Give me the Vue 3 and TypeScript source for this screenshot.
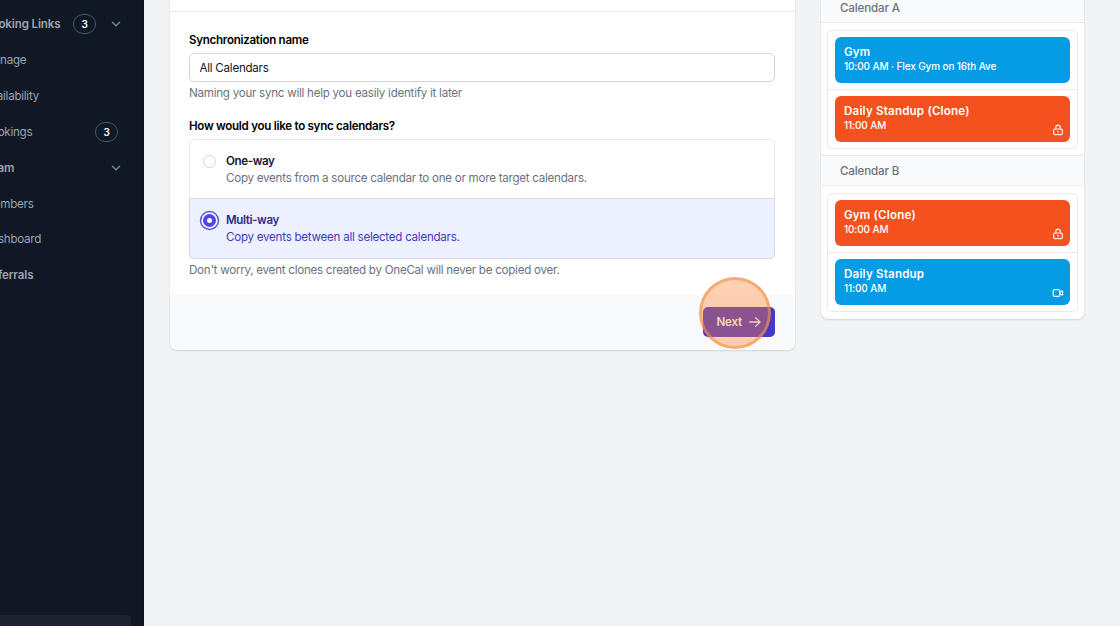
<template>
  <div class="page">
    <aside class="sidebar">
      <nav class="nav">
        <div
          v-for="item in navItems"
          :key="item.label"
          class="nav-item"
          :class="{ section: item.section }"
        >
          <span class="nav-label">{{ item.label }}</span>
          <span v-if="item.count" class="nav-count">{{ item.count }}</span>
          <svg v-if="item.expandable" class="chevron" viewBox="0 0 12 12">
            <path d="M2.4 4.3 L6 7.8 L9.6 4.3" />
          </svg>
        </div>
      </nav>
      <div class="nav-footer"></div>
    </aside>

    <main class="content">
      <section class="card form-card">
        <div class="card-header"></div>
        <div class="card-body">
          <label class="field-label" for="sync-name">Synchronization name</label>
          <input id="sync-name" v-model="syncName" class="field-input" type="text" />
          <p class="field-hint">Naming your sync will help you easily identify it later</p>

          <div class="field-label second">How would you like to sync calendars?</div>
          <div class="options">
            <div
              v-for="option in options"
              :key="option.id"
              class="option"
              :class="{ selected: option.id === syncType }"
              @click="syncType = option.id"
            >
              <span class="radio"></span>
              <div class="option-text">
                <div class="option-title">{{ option.title }}</div>
                <div class="option-desc">{{ option.description }}</div>
              </div>
            </div>
          </div>
          <p class="field-hint">
            Don't worry, event clones created by OneCal will never be copied over.
          </p>
        </div>
        <div class="card-footer">
          <button class="next-button" type="button">
            Next
            <svg class="arrow" viewBox="0 0 12 12">
              <path d="M0.8 6 H10.8 M6.5 1.6 L11 6 L6.5 10.4" />
            </svg>
          </button>
          <span class="click-marker"></span>
        </div>
      </section>

      <section class="card preview-card">
        <div v-for="calendar in calendars" :key="calendar.name" class="calendar">
          <div class="calendar-header">{{ calendar.name }}</div>
          <div class="calendar-body">
            <div class="events">
              <div v-for="event in calendar.events" :key="event.title" class="event-row">
                <div class="event" :class="{ clone: event.icon === 'lock' }">
                  <div class="event-title">{{ event.title }}</div>
                  <div class="event-time">{{ event.time }}</div>
                  <svg v-if="event.icon === 'lock'" class="event-icon" viewBox="0 0 12 12">
                    <rect x="1.7" y="5" width="8.6" height="5.6" rx="1" />
                    <path d="M3.8 5 V3.4 a2.2 2.2 0 0 1 4.4 0 V5" />
                    <path d="M6 7.2 V8.4" />
                  </svg>
                  <svg v-if="event.icon === 'video'" class="event-icon" viewBox="0 0 12 12">
                    <rect x="1.2" y="2.7" width="6.6" height="6.6" rx="1" />
                    <path d="M7.8 5.2 L10.6 3.9 V8.1 L7.8 6.8 Z" />
                  </svg>
                </div>
              </div>
            </div>
          </div>
        </div>
      </section>
    </main>
  </div>
</template>

<script setup lang="ts">
import { ref } from "vue";

interface NavItem {
  label: string;
  section?: boolean;
  count?: number;
  expandable?: boolean;
}

interface CalendarEvent {
  title: string;
  time: string;
  icon?: "lock" | "video";
}

const navItems: NavItem[] = [
  { label: "Booking Links", section: true, count: 3, expandable: true },
  { label: "Manage" },
  { label: "Availability" },
  { label: "Bookings", count: 3 },
  { label: "Team", section: true, expandable: true },
  { label: "Members" },
  { label: "Dashboard" },
  { label: "Referrals", section: true },
];

const syncName = ref("All Calendars");
const syncType = ref("multi");

const options = [
  {
    id: "one",
    title: "One-way",
    description: "Copy events from a source calendar to one or more target calendars.",
  },
  {
    id: "multi",
    title: "Multi-way",
    description: "Copy events between all selected calendars.",
  },
];

const calendars: { name: string; events: CalendarEvent[] }[] = [
  {
    name: "Calendar A",
    events: [
      { title: "Gym", time: "10:00 AM · Flex Gym on 16th Ave" },
      { title: "Daily Standup (Clone)", time: "11:00 AM", icon: "lock" },
    ],
  },
  {
    name: "Calendar B",
    events: [
      { title: "Gym (Clone)", time: "10:00 AM", icon: "lock" },
      { title: "Daily Standup", time: "11:00 AM", icon: "video" },
    ],
  },
];
</script>

<style>
body {
  margin: 0;
  overflow: hidden;
}
</style>

<style scoped>
.page {
  display: flex;
  height: 626px;
  overflow: hidden;
  background: #f2f3f5;
  font-family: Inter, "Liberation Sans", sans-serif;
  font-size: 11.6px;
  letter-spacing: -0.255px;
  color: #111827;
}

.page * {
  box-sizing: border-box;
}

.sidebar {
  display: flex;
  flex-direction: column;
  justify-content: space-between;
  flex: none;
  width: 160px;
  margin-left: -16px;
  background: #101826;
  border-right: 1px solid #080e1a;
}

.nav {
  padding-top: 6.4px;
}

.nav-item {
  display: flex;
  align-items: center;
  height: 35.87px;
  padding-right: 21px;
  color: #9ca3af;
}

.nav-item.section {
  font-weight: 600;
  letter-spacing: -0.14px;
}

.nav-label {
  flex: 1;
  margin-left: -0.4px;
  white-space: nowrap;
}

.section .nav-label {
  margin-left: 0;
}

.nav-count {
  width: 23px;
  height: 20px;
  margin-right: 4px;
  border: 1px solid #4b5563;
  border-radius: 10px;
  color: #fff;
  font-size: 10px;
  font-weight: 600;
  line-height: 18px;
  text-align: center;
}

.nav-count + .chevron {
  margin-left: 10px;
}

.chevron {
  width: 12px;
  height: 12px;
  fill: none;
  stroke: #7b8494;
  stroke-width: 1.5;
  stroke-linecap: round;
  stroke-linejoin: round;
}

.nav-footer {
  width: 147px;
  height: 11px;
  border-radius: 4px 4px 0 0;
  background: #1b2231;
}

.content {
  display: flex;
  flex: 1;
  align-items: flex-start;
  gap: 26px;
  padding-left: 26px;
}

.card {
  background: #fff;
  border-radius: 0 0 7px 7px;
  box-shadow: 0 1px 2px rgba(0, 0, 0, 0.12), 0 0 1px rgba(0, 0, 0, 0.12);
  overflow: hidden;
}

.form-card {
  width: 625px;
}

.card-header {
  height: 12px;
  border-bottom: 1px solid #e7e9ec;
}

.card-body {
  height: 282px;
  padding: 20px 20px 0 19px;
}

.field-label {
  display: block;
  color: #000;
  font-weight: 600;
  letter-spacing: -0.29px;
  line-height: 16px;
}

.field-label.second {
  margin-top: 17px;
}

.field-input {
  display: block;
  width: 100%;
  height: 29px;
  margin-top: 5px;
  padding: 0 10px 0 9.5px;
  border: 1px solid #d1d5db;
  border-radius: 5px;
  outline: none;
  background: #fff;
  color: #111827;
  font: inherit;
  letter-spacing: inherit;
}

.field-hint {
  margin: 3px 0 0;
  color: #6b7280;
  line-height: 16px;
}

.options {
  margin-top: 5px;
}

.option {
  display: flex;
  height: 60px;
  padding: 13px 10px 0 13px;
  border: 1px solid #e5e7eb;
  border-radius: 5px 5px 0 0;
  line-height: 16.5px;
}

.option + .option {
  height: 61px;
  margin-top: -1px;
  border-radius: 0 0 5px 5px;
}

.option.selected {
  border-color: #d3d9f3;
  background: #edf0fe;
}

.radio {
  flex: none;
  width: 13px;
  height: 13px;
  margin: 1.5px 10px 0 0;
  border: 1px solid #d1d5db;
  border-radius: 50%;
  background: #fff;
}

.selected .radio {
  margin-top: 2px;
  border: 4px solid #4f46e5;
  box-shadow: 0 0 0 1.7px #f4f5ff, 0 0 0 3.2px #5b53d6;
}

.option-title {
  font-weight: 600;
  letter-spacing: -0.4px;
}

.option-desc {
  color: #6b7280;
}

.selected .option-title {
  color: #312e81;
}

.selected .option-desc {
  color: #4338ca;
}

.card-footer {
  position: relative;
  display: flex;
  justify-content: flex-end;
  align-items: flex-start;
  height: 56px;
  padding: 13px 20px 0 0;
  background: #f9fafb;
}

.next-button {
  display: flex;
  align-items: center;
  justify-content: space-between;
  width: 72px;
  height: 30px;
  padding: 0 14px 0 13.5px;
  border: 0;
  border-radius: 5px;
  background: #4338ca;
  color: #fff;
  font: inherit;
  font-weight: 600;
  letter-spacing: -0.2px;
}

.arrow {
  width: 12px;
  height: 12px;
  fill: none;
  stroke: #fff;
  stroke-width: 1.3;
  stroke-linecap: round;
  stroke-linejoin: round;
}

/* highlight ring drawn over the button */
.click-marker {
  position: absolute;
  right: 24px;
  bottom: 1px;
  width: 72px;
  height: 72px;
  border: 3px solid rgba(243, 145, 70, 0.6);
  border-radius: 50%;
  background: rgba(255, 131, 45, 0.37);
}

.preview-card {
  width: 263px;
}

.calendar-header {
  height: 31px;
  padding-left: 19px;
  border-top: 1px solid #e7e9ec;
  border-bottom: 1px solid #e7e9ec;
  background: #f9fafb;
  color: #6b7280;
  font-weight: 500;
  letter-spacing: -0.15px;
  line-height: 31px;
}

.calendar:first-child .calendar-header {
  margin-top: -8px;
  line-height: 30px;
}

.calendar-body {
  padding: 6.5px 6px 6.9px;
}

.events {
  border: 1px solid #e7e9ec;
  border-radius: 5px;
}

.event-row {
  padding: 6.5px 7px 6px 6.5px;
}

.event-row + .event-row {
  border-top: 1px solid #e7e9ec;
}

.event {
  position: relative;
  height: 45.5px;
  padding: 7px 9.5px 0;
  border-radius: 6px;
  background: #069be5;
  color: #fff;
}

.event.clone {
  background: #f4511e;
}

.event-title {
  font-weight: 600;
  letter-spacing: 0.18px;
  line-height: 16px;
}

.event-time {
  font-size: 10px;
  font-weight: 500;
  letter-spacing: -0.12px;
  line-height: 13.5px;
}

.event-icon {
  position: absolute;
  right: 6px;
  bottom: 6px;
  width: 12px;
  height: 12px;
  fill: none;
  stroke: #fff;
  stroke-opacity: 0.9;
  stroke-width: 1.2;
  stroke-linecap: round;
  stroke-linejoin: round;
}
</style>
